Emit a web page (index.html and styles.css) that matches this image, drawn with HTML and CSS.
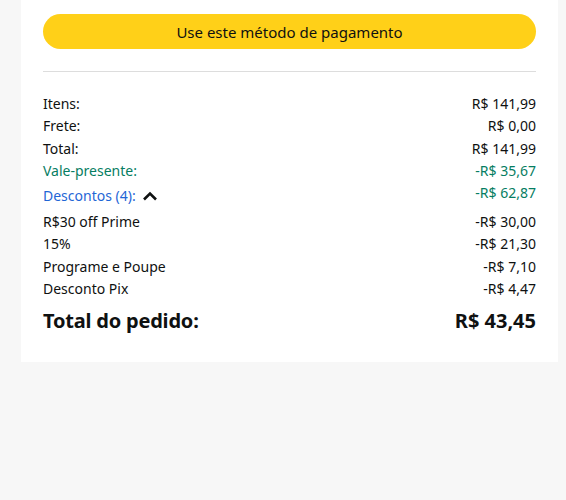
FILE: index.html
```html
<!DOCTYPE html>
<html lang="pt-BR">
<head>
  <meta charset="UTF-8" />
  <meta name="viewport" content="width=device-width, initial-scale=1" />
  <title>Resumo do pedido</title>
  <link rel="stylesheet" href="styles.css">
</head>
<body>

  <div class="card">
    <button class="pay-btn">Use este método de pagamento</button>

    <hr class="divider">

    <div class="summary">
      <div class="row"><span>Itens:</span><span>R$ 141,99</span></div>
      <div class="row"><span>Frete:</span><span>R$ 0,00</span></div>
      <div class="row"><span>Total:</span><span>R$ 141,99</span></div>
      <div class="row green"><span>Vale-presente:</span><span>-R$ 35,67</span></div>
      <div class="row discounts">
        <span class="link">Descontos (4):
          <svg class="chevron" width="16" height="10" viewBox="0 0 16 10">
            <path d="M2 8.5 L8 2.5 L14 8.5" fill="none" stroke="#0f1111" stroke-width="2.6"/>
          </svg>
        </span>
        <span class="green">-R$ 62,87</span>
      </div>
      <div class="row"><span>R$30 off Prime</span><span>-R$ 30,00</span></div>
      <div class="row"><span>15%</span><span>-R$ 21,30</span></div>
      <div class="row"><span>Programe e Poupe</span><span>-R$ 7,10</span></div>
      <div class="row"><span>Desconto Pix</span><span>-R$ 4,47</span></div>
      <div class="row grand"><span class="grand-label">Total do pedido:</span><span>R$ 43,45</span></div>
    </div>
  </div>

</body>
</html>
```

FILE: styles.css
```css
body {
  margin: 0;
  background: #f7f7f7;
  font-family: 'Noto Sans', 'Liberation Sans', sans-serif;
  color: #0f1111;
  font-size: 14px;
}
.card {
  background: #fff;
  margin: 0 8px 0 21px;
  padding: 14px 22px 28px;
}
.pay-btn {
  display: block;
  width: 100%;
  height: 35px;
  border: none;
  border-radius: 18px;
  background: #ffd018;
  color: #0f1111;
  font-family: inherit;
  font-size: 15px;
  cursor: pointer;
}
.divider {
  border: none;
  border-top: 1px solid #dddddd;
  margin: 22px 0 20px;
}
.summary {
  display: flex;
  flex-direction: column;
}
.row {
  display: flex;
  justify-content: space-between;
  align-items: center;
  height: 22.5px;
}
.green {
  color: #067d62;
}
.discounts {
  height: 27px;
  align-items: flex-start;
  padding-top: 1px;
}
.link {
  color: #1f66d6;
  display: flex;
  align-items: center;
  gap: 6px;
  margin-top: 3px;
}
.grand {
  font-size: 20px;
  font-weight: 700;
  height: 34px;
  align-items: flex-end;
}
.grand-label {
  letter-spacing: -0.2px;
}
```
